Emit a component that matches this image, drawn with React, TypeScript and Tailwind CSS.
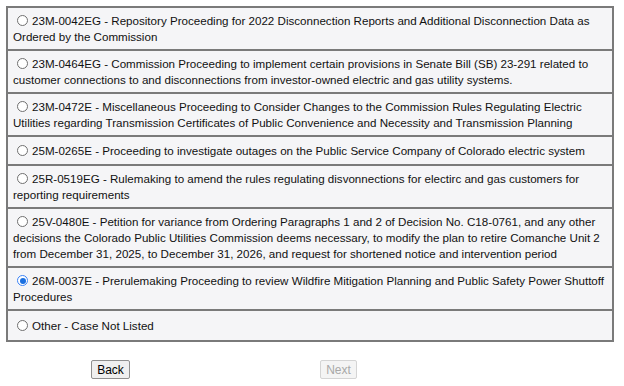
import React from "react";

const items: { id: string; text: string; checked?: boolean }[] = [
  { id: "a", text: "23M-0042EG - Repository Proceeding for 2022 Disconnection Reports and Additional Disconnection Data as Ordered by the Commission" },
  { id: "b", text: "23M-0464EG - Commission Proceeding to implement certain provisions in Senate Bill (SB) 23-291 related to customer connections to and disconnections from investor-owned electric and gas utility systems." },
  { id: "c", text: "23M-0472E - Miscellaneous Proceeding to Consider Changes to the Commission Rules Regulating Electric Utilities regarding Transmission Certificates of Public Convenience and Necessity and Transmission Planning" },
  { id: "d", text: "25M-0265E - Proceeding to investigate outages on the Public Service Company of Colorado electric system" },
  { id: "e", text: "25R-0519EG - Rulemaking to amend the rules regulating disvonnections for electirc and gas customers for reporting requirements" },
  { id: "f", text: "25V-0480E - Petition for variance from Ordering Paragraphs 1 and 2 of Decision No. C18-0761, and any other decisions the Colorado Public Utilities Commission deems necessary, to modify the plan to retire Comanche Unit 2 from December 31, 2025, to December 31, 2026, and request for shortened notice and intervention period" },
  { id: "g", text: "26M-0037E - Prerulemaking Proceeding to review Wildfire Mitigation Planning and Public Safety Power Shuttoff Procedures", checked: true },
  { id: "h", text: "Other - Case Not Listed" },
];

function Radio({ checked }: { checked?: boolean }) {
  return checked ? (
    <span className="inline-block align-[-1px] w-[11px] h-[11px] rounded-full border border-[#3b82f6] bg-white ml-[4px] mr-[4px] relative">
      <span className="absolute inset-[1.5px] rounded-full bg-[#1a6fe0]" />
    </span>
  ) : (
    <span className="inline-block align-[-1px] w-[11px] h-[11px] rounded-full border border-[#707070] bg-white ml-[4px] mr-[4px]" />
  );
}

export default function App() {
  return (
    <div className="w-[624px] h-[386px] bg-white text-[11.6px] leading-[16px] text-[#111]" style={{ fontFamily: '"Liberation Sans", Arial, sans-serif' }}>
      <div className="pt-[6px] pl-[6px]">
        <div className="w-[608px] border-2 border-[#7a7a7a] bg-[#f5f5f7] flex flex-col divide-y-2 divide-[#7a7a7a]">
          {items.map((it) => (
            <div key={it.id} className="min-h-[29px] flex items-center pl-[5px] pr-[2px] pt-[5px] pb-[4px]">
              <div>
                <Radio checked={it.checked} />
                {it.text}
              </div>
            </div>
          ))}
        </div>
        <div className="flex mt-[18px]">
          <button className="ml-[85px] h-[19px] w-[39px] border border-[#8f8f8f] rounded-[2px] bg-[#efefef] text-[12px] leading-[16px] text-black">
            Back
          </button>
          <button disabled className="ml-[190px] h-[19px] w-[37px] border border-[#d4d4d4] rounded-[2px] bg-[#f4f4f4] text-[12px] leading-[16px] text-[#a8a8a8]">
            Next
          </button>
        </div>
      </div>
    </div>
  );
}
